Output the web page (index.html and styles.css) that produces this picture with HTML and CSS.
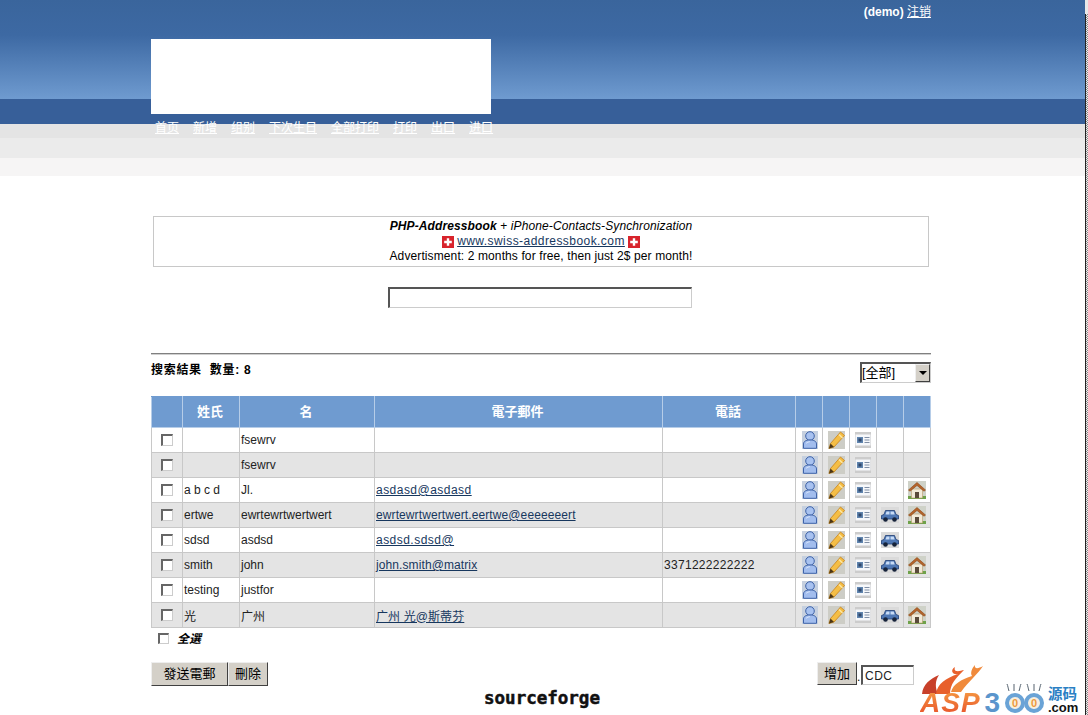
FILE: index.html
```html
<!DOCTYPE html>
<html lang="zh">
<head>
<meta charset="utf-8">
<title>Address Book</title>
<link rel="stylesheet" href="styles.css">
</head>
<body>
<svg class="defs" width="0" height="0" aria-hidden="true">
  <symbol id="i-user" viewBox="0 0 16 18">
    <rect width="16" height="18" fill="#c6d0df"/>
    <ellipse cx="8" cy="5" rx="4.300" ry="4.300" fill="#a8c2f0" stroke="#3f63a8"/>
    <path d="M1.500 17.300v-4.300C1.500 10.300 4 9 8 9s6.500 1.300 6.500 4v4.300z" fill="#a2bdee" stroke="#3f63a8"/>
    <path d="M4 12.500c1-1.300 3-1.800 4-1.800" stroke="#d8e5fb" fill="none"/>
  </symbol>
  <symbol id="i-edit" viewBox="0 0 17 18">
    <rect width="17" height="18" fill="#cdcdc6"/>
    <path d="M12.500 1l4 3.500L6 16 1 17.500l1.500-5z" fill="#f5be45" stroke="#c8841a" stroke-width=".8"/>
    <path d="M1 17.500l1.500-5 3.500 3.500z" fill="#4b3618"/>
    <path d="M11 3.500l3.500 3.500" stroke="#fbe7a8" stroke-width="1.400"/>
  </symbol>
  <symbol id="i-card" viewBox="0 0 16 16">
    <rect width="16" height="16" fill="#cccccc"/>
    <rect x=".500" y="2.500" width="15" height="11" fill="#f6f8fb"/>
    <rect x="2" y="5" width="6" height="6" fill="#5f84ae"/>
    <rect x="3.500" y="6.500" width="3" height="3" fill="#30476b"/>
    <path d="M9.500 5.500h5M9.500 8h5M9.500 10.500h5" stroke="#7f8ea5"/>
  </symbol>
  <symbol id="i-car" viewBox="0 0 18 16">
    <rect width="18" height="16" fill="#dadada"/>
    <path d="M.500 12V8.500L3 7.500 4.500 3.500h9L15 7.500l2.500 1V12z" fill="#4f78b5" stroke="#213f73" stroke-width=".8"/>
    <path d="M5.500 4.500h3v3H4.500zM9.500 4.500h3.200l1 3H9.500z" fill="#c8dbf5"/>
    <circle cx="4.500" cy="12.500" r="2.300" fill="#16233a"/>
    <circle cx="13.500" cy="12.500" r="2.300" fill="#16233a"/>
  </symbol>
  <symbol id="i-home" viewBox="0 0 18 18">
    <rect width="18" height="18" fill="#cfd2c8"/>
    <path d="M0 15h18v3H0z" fill="#6fa24a"/>
    <path d="M3.500 8h11v9h-11z" fill="#f2ead8" stroke="#b79a6a" stroke-width=".6"/>
    <path d="M9 1.500L.500 9l1.500 1.200L9 4.500l7 5.700L17.500 9z" fill="#b5652b" stroke="#8a4518" stroke-width=".6"/>
    <path d="M7 11h4v6H7z" fill="#5a4a3a"/>
  </symbol>
  <symbol id="i-flag" viewBox="0 0 12 12">
    <rect width="12" height="12" fill="#d8242c"/>
    <path d="M4.800 2.200h2.400v2.600h2.600v2.400H7.200v2.600H4.800V7.200H2.200V4.800h2.600z" fill="#fff"/>
  </symbol>
</svg>

<header class="masthead">
  <div class="wrap user-line"><b>(demo)</b> <a href="#">注销</a></div>
  <div class="wrap logo-box"></div>
  <nav class="wrap nav">
    <a href="#">首页</a><a href="#">新增</a><a href="#">组别</a><a href="#">下次生日</a><a href="#">全部打印</a><a href="#">打印</a><a href="#">出口</a><a href="#">进口</a>
  </nav>
</header>
<div class="bands"><div class="b1"></div><div class="b2"></div><div class="b3"></div></div>

<main class="wrap content">
  <section class="ad">
    <div><b><i>PHP-Addressbook</i></b> + <i>iPhone-Contacts-Synchronization</i></div>
    <div class="ad-link"><svg class="flag"><use href="#i-flag"/></svg><a href="#">www.swiss-addressbook.com</a><svg class="flag"><use href="#i-flag"/></svg></div>
    <div>Advertisment: 2 months for free, then just 2$ per month!</div>
  </section>

  <div class="search-row"><input class="search" type="text"></div>

  <div class="result-bar">
    <strong class="count">搜索結果&nbsp; 數量: 8</strong>
    <div class="fake-select"><span>[全部]</span><span class="arrow"></span></div>
  </div>

  <table class="list">
    <colgroup>
      <col class="c-check"><col class="c-last"><col class="c-first"><col class="c-mail"><col class="c-tel">
      <col class="c-ic"><col class="c-ic"><col class="c-ic"><col class="c-ic"><col class="c-ic">
    </colgroup>
    <thead>
      <tr><th></th><th>姓氏</th><th>名</th><th>電子郵件</th><th>電話</th><th></th><th></th><th></th><th></th><th></th></tr>
    </thead>
    <tbody>
      <tr><td class="cb"><span class="box"></span></td><td></td><td>fsewrv</td><td></td><td></td>
        <td class="ic"><svg class="i-user"><use href="#i-user"/></svg></td><td class="ic"><svg class="i-edit"><use href="#i-edit"/></svg></td><td class="ic"><svg class="i-card"><use href="#i-card"/></svg></td><td></td><td></td></tr>
      <tr class="alt"><td class="cb"><span class="box"></span></td><td></td><td>fsewrv</td><td></td><td></td>
        <td class="ic"><svg class="i-user"><use href="#i-user"/></svg></td><td class="ic"><svg class="i-edit"><use href="#i-edit"/></svg></td><td class="ic"><svg class="i-card"><use href="#i-card"/></svg></td><td></td><td></td></tr>
      <tr><td class="cb"><span class="box"></span></td><td>a b c d</td><td>Jl.</td><td><a class="loose" href="#">asdasd@asdasd</a></td><td></td>
        <td class="ic"><svg class="i-user"><use href="#i-user"/></svg></td><td class="ic"><svg class="i-edit"><use href="#i-edit"/></svg></td><td class="ic"><svg class="i-card"><use href="#i-card"/></svg></td><td></td><td class="ic"><svg class="i-home"><use href="#i-home"/></svg></td></tr>
      <tr class="alt"><td class="cb"><span class="box"></span></td><td>ertwe</td><td>ewrtewrtwertwert</td><td><a href="#">ewrtewrtwertwert.eertwe@eeeeeeert</a></td><td></td>
        <td class="ic"><svg class="i-user"><use href="#i-user"/></svg></td><td class="ic"><svg class="i-edit"><use href="#i-edit"/></svg></td><td class="ic"><svg class="i-card"><use href="#i-card"/></svg></td><td class="ic"><svg class="i-car"><use href="#i-car"/></svg></td><td class="ic"><svg class="i-home"><use href="#i-home"/></svg></td></tr>
      <tr><td class="cb"><span class="box"></span></td><td>sdsd</td><td>asdsd</td><td><a class="loose" href="#">asdsd.sdsd@</a></td><td></td>
        <td class="ic"><svg class="i-user"><use href="#i-user"/></svg></td><td class="ic"><svg class="i-edit"><use href="#i-edit"/></svg></td><td class="ic"><svg class="i-card"><use href="#i-card"/></svg></td><td class="ic"><svg class="i-car"><use href="#i-car"/></svg></td><td></td></tr>
      <tr class="alt"><td class="cb"><span class="box"></span></td><td>smith</td><td>john</td><td><a href="#">john.smith@matrix</a></td><td class="tel">3371222222222</td>
        <td class="ic"><svg class="i-user"><use href="#i-user"/></svg></td><td class="ic"><svg class="i-edit"><use href="#i-edit"/></svg></td><td class="ic"><svg class="i-card"><use href="#i-card"/></svg></td><td class="ic"><svg class="i-car"><use href="#i-car"/></svg></td><td class="ic"><svg class="i-home"><use href="#i-home"/></svg></td></tr>
      <tr><td class="cb"><span class="box"></span></td><td>testing</td><td>justfor</td><td></td><td></td>
        <td class="ic"><svg class="i-user"><use href="#i-user"/></svg></td><td class="ic"><svg class="i-edit"><use href="#i-edit"/></svg></td><td class="ic"><svg class="i-card"><use href="#i-card"/></svg></td><td></td><td></td></tr>
      <tr class="alt"><td class="cb"><span class="box"></span></td><td>光</td><td>广州</td><td><a href="#">广州 光@斯蒂芬</a></td><td></td>
        <td class="ic"><svg class="i-user"><use href="#i-user"/></svg></td><td class="ic"><svg class="i-edit"><use href="#i-edit"/></svg></td><td class="ic"><svg class="i-card"><use href="#i-card"/></svg></td><td class="ic"><svg class="i-car"><use href="#i-car"/></svg></td><td class="ic"><svg class="i-home"><use href="#i-home"/></svg></td></tr>
    </tbody>
  </table>

  <div class="select-all"><span class="box small"></span><b><i>全選</i></b></div>

  <div class="actions">
    <div class="left"><button class="btn wide">發送電郵</button><button class="btn">刪除</button></div>
    <div class="right"><button class="btn add">增加</button><span class="dot">.</span><input class="cdc" type="text" value="CDC"></div>
  </div>
  <div class="sf">sourceforge</div>
</main>

<div class="watermark">
  <svg class="flames" viewBox="0 0 64 32">
    <path d="M2 32C3 22 10 17 19 13 15 19 15 25 18 32z" fill="#c8402a"/>
    <path d="M16 32C17 22 26 16 38 12 32 13 30 8 35 5 33 11 40 9 44 8 36 16 30 22 30 32z" fill="#e8602c"/>
    <path d="M31 30C33 22 42 17 52 14 50 11 52 6 55 3 54 7 58 7 63 4 58 12 48 20 41 30z" fill="#f08a3c"/>
  </svg>
  <div class="wm-row"><span class="wm-asp">ASP</span><span class="wm-three">3</span><span class="eye">0</span><span class="eye">0</span></div>
  <svg class="lashes" viewBox="0 0 44 9"><path d="M5 8C4 5 4 3 3 1M10 8V1M15 8c1-3 1-5 2-7M25 8C24 5 24 3 23 1M30 8V1M35 8c1-3 1-5 2-7" stroke="#56636f" fill="none"/></svg>
  <div class="wm-side"><span class="wm-cn">源码</span><span class="wm-com">.com</span></div>
</div>
<div class="edge"></div>
</body>
</html>
```
FILE: styles.css
```css
html, body { margin: 0; padding: 0; }
body {
  background: #fff;
  color: #000;
  font-family: "Liberation Sans", "Noto Sans CJK SC", sans-serif;
  font-size: 12px;
  position: relative;
  height: 715px;
  overflow: hidden;
}
.defs { position: absolute; }
.wrap { width: 780px; margin-left: 151px; }

.edge {
  position: absolute;
  right: 0;
  top: 0;
  bottom: 0;
  width: 2px;
  border-left: 1px solid #222;
  background: repeating-conic-gradient(#888 0 25%, #eee 0 50%) 0 0 / 2px 2px;
}
.edge::before {
  content: "";
  position: absolute;
  left: -1px;
  top: 0;
  width: 3px;
  height: 14px;
  background: #e8e8e8;
}

.masthead {
  height: 124px;
  background: linear-gradient(#3a659c 0, #3d69a3 35px, #6f9bd0 99px, #375f99 99px, #375f99 124px);
  color: #fff;
}
.user-line { height: 39px; box-sizing: border-box; padding-top: 5px; text-align: right; line-height: 15px; }
.user-line a { color: #fff; }
.logo-box { width: 340px; height: 75px; background: #fff; }
.nav { display: flex; gap: 14px; padding: 6px 0 0 4px; height: 16px; box-sizing: content-box; line-height: 16px; position: relative; }
.nav a { color: #fff; }

.bands { height: 52px; }
.b1 { height: 14px; background: #e4e4e4; }
.b2 { height: 20px; background: #ebebeb; }
.b3 { height: 18px; background: #f6f5f5; }

.content { padding-top: 40px; }
.ad {
  box-sizing: border-box;
  width: 776px;
  height: 51px;
  margin-left: 2px;
  border: 1px solid #c8c8c8;
  text-align: center;
  line-height: 15px;
  padding-top: 2px;
  letter-spacing: .11px;
}
.ad a { color: #17375e; letter-spacing: .44px; }
.ad-link { display: flex; justify-content: center; align-items: center; gap: 3px; }
.flag { width: 12px; height: 12px; }

.search-row { display: flex; justify-content: center; margin-top: 20px; padding-right: 2px; }
.search {
  box-sizing: border-box;
  width: 304px;
  height: 21px;
  margin: 0;
  border: 1px solid #ccc;
  border-top: 2px solid #555;
  border-left: 2px solid #555;
  background: #fff;
}

.result-bar {
  margin-top: 45px;
  height: 43px;
  border-top: 1px solid #808080;
  box-shadow: inset 0 1px 0 #d0d0d0;
  display: flex;
  justify-content: space-between;
  box-sizing: border-box;
}
.count { font-size: 12px; line-height: 16px; padding-top: 8px; letter-spacing: .7px; }
.fake-select {
  box-sizing: border-box;
  width: 71px;
  height: 21px;
  margin-top: 8px;
  border: 1px solid #ccc;
  border-top: 2px solid #555;
  border-left: 2px solid #555;
  display: flex;
  justify-content: space-between;
  font-size: 13px;
  line-height: 17px;
}
.arrow {
  width: 15px;
  background: #d4d0c8;
  border: 1px solid;
  border-color: #eee #404040 #404040 #eee;
  box-sizing: border-box;
  position: relative;
}
.arrow::after {
  content: "";
  position: absolute;
  left: 3px;
  top: 6px;
  border: 4px solid transparent;
  border-top: 4px solid #000;
  border-bottom: 0;
}

.list {
  width: 780px;
  border-collapse: collapse;
  table-layout: fixed;
  border: 1px solid #c8c8c8;
}
.c-check { width: 31px; }
.c-last { width: 57px; }
.c-first { width: 135px; }
.c-mail { width: 288px; }
.c-tel { width: 133px; }
.c-ic { width: 27px; }
.list th {
  height: 31px;
  padding: 0 2px 4px 0;
  box-sizing: border-box;
  background: #6f9bd0;
  color: #fff;
  font-size: 13px;
  font-weight: bold;
  border: 1px solid #b6cde8;
  border-top-color: #6f9bd0;
}
.list td {
  height: 24px;
  padding: 0 1px;
  border: 1px solid #c8c8c8;
  white-space: nowrap;
  overflow: hidden;
  color: #222;
}
.list .alt td { background: #e4e4e4; }
.list a { color: #17375e; letter-spacing: .1px; }
.list a.loose { letter-spacing: .47px; }
.tel { letter-spacing: .3px; }
.cb { text-align: center; }
.ic { text-align: center; line-height: 0; }
.box {
  display: inline-block;
  box-sizing: border-box;
  width: 12px;
  height: 12px;
  background: #fff;
  border: 1px solid #ccc;
  border-top: 2px solid #666;
  border-left: 2px solid #666;
  vertical-align: middle;
  margin-bottom: 1px;
}
.box.small { width: 11px; height: 11px; margin-bottom: 2px; }
.i-user { width: 16px; height: 18px; margin-left: 1px; }
.i-edit { width: 17px; height: 18px; }
.i-card { width: 16px; height: 16px; }
.i-car { width: 18px; height: 16px; }
.i-home { width: 18px; height: 18px; }

.select-all { display: flex; align-items: center; gap: 8px; padding: 2px 0 0 7px; height: 18px; line-height: 16px; }
.actions { display: flex; justify-content: space-between; margin-top: 14px; padding-right: 17px; height: 26px; }
.btn {
  box-sizing: border-box;
  height: 24px;
  margin: 0;
  padding: 0 0 5px;
  width: 40px;
  background: #d4d0c8;
  border: 1px solid;
  border-color: #eee #404040 #404040 #eee;
  font: 13px "Liberation Sans", "Noto Sans CJK SC", sans-serif;
  color: #000;
}
.wide { width: 77px; }
.add { height: 23px; }
.right { display: flex; align-items: flex-start; }
.dot { width: 4px; padding-top: 7px; line-height: 16px; }
.cdc {
  box-sizing: border-box;
  width: 53px;
  height: 20px;
  margin: 3px 0 0;
  padding: 0 2px;
  border: 1px solid #ccc;
  border-top: 2px solid #555;
  border-left: 2px solid #555;
  font: 12px "Liberation Sans", sans-serif;
  letter-spacing: .5px;
  color: #222;
}
.sf {
  text-align: center;
  font: bold 17.500px/20px "DejaVu Sans Mono", monospace;
  -webkit-text-stroke: .5px #111;
  color: #111;
  padding-left: 2px;
}

.watermark {
  position: absolute;
  left: 917px;
  top: 660px;
  width: 165px;
  height: 55px;
}
.flames { position: absolute; left: 3px; top: 2px; width: 64px; height: 32px; }
.lashes { position: absolute; left: 87px; top: 23px; width: 44px; height: 9px; }
.wm-row { position: absolute; left: 3px; top: 31px; display: flex; align-items: center; height: 24px; }
.wm-asp {
  font: italic bold 28px/26px "Liberation Sans", sans-serif;
  letter-spacing: 1px;
  padding-right: 4px;
  background: linear-gradient(#f59a42, #e8502a);
  -webkit-background-clip: text;
  background-clip: text;
  color: transparent;
}
.wm-three {
  font: bold 28px/26px "Liberation Sans", sans-serif;
  color: #5b95cc;
  margin-right: 5px;
}
.eye {
  box-sizing: border-box;
  width: 20px;
  height: 20px;
  margin-right: -1px;
  border: 4px solid #6aa3d6;
  border-radius: 50%;
  background: #f7efe0;
  color: #ee9a3c;
  font: bold 11px/12px "Liberation Sans", sans-serif;
  text-align: center;
}
.wm-side { position: absolute; left: 131px; top: 25px; display: flex; flex-direction: column; }
.wm-cn { font: bold 14.500px/16px "Noto Sans CJK SC", sans-serif; color: #2a7fc4; }
.wm-com { font: bold 13px/13px "Liberation Sans", sans-serif; color: #111; }
```
